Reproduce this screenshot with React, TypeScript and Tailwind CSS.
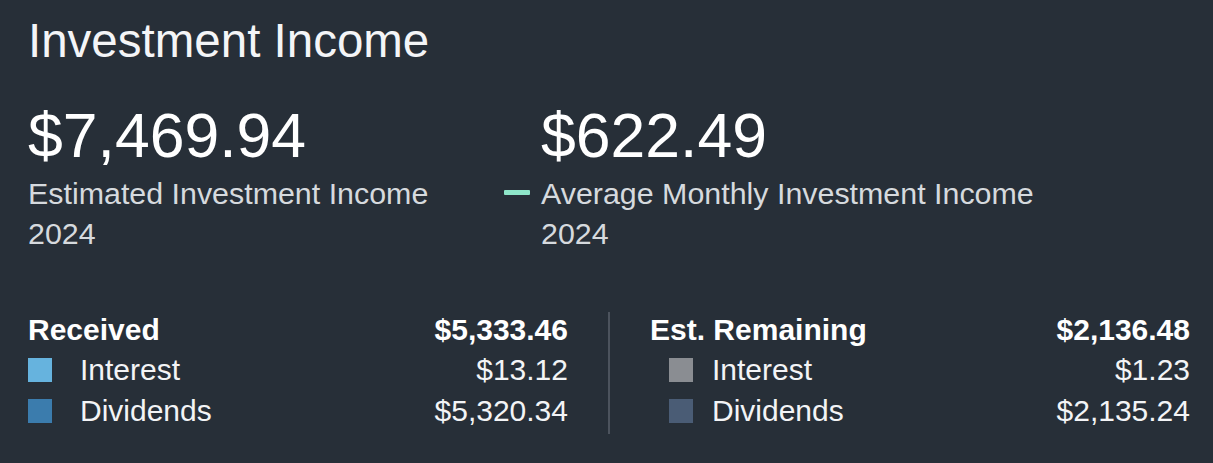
const received = {
  label: "Received",
  total: "$5,333.46",
  rows: [
    { name: "Interest", amount: "$13.12", color: "bg-[#66b3de]" },
    { name: "Dividends", amount: "$5,320.34", color: "bg-[#3b7cad]" },
  ],
};

const remaining = {
  label: "Est. Remaining",
  total: "$2,136.48",
  rows: [
    { name: "Interest", amount: "$1.23", color: "bg-[#8a8d92]" },
    { name: "Dividends", amount: "$2,135.24", color: "bg-[#4a5c75]" },
  ],
};

type Breakdown = typeof received;

function BreakdownList({
  data,
  indent,
}: {
  data: Breakdown;
  indent: boolean;
}) {
  return (
    <div className="flex-1">
      <div className="flex items-center justify-between text-[30px] font-bold leading-[40px] text-white">
        <span>{data.label}</span>
        <span>{data.total}</span>
      </div>
      {data.rows.map((row) => (
        <div
          key={row.name}
          className="flex items-center justify-between text-[30px] leading-[40.5px] text-[#f3f4f6]"
        >
          <div className={`flex items-center ${indent ? "pl-[19px]" : ""}`}>
            <span className={`h-6 w-6 ${row.color}`} />
            <span className={indent ? "ml-[19px]" : "ml-[28px]"}>
              {row.name}
            </span>
          </div>
          <span>{row.amount}</span>
        </div>
      ))}
    </div>
  );
}

export default function App() {
  return (
    <div
      className="h-[463px] w-[1213px] overflow-hidden bg-[#272f38] pl-[28px] pr-[23px] pt-[13px]"
      style={{ fontFamily: '"Liberation Sans", Arial, sans-serif' }}
    >
      <h1 className="text-[47.5px] font-light leading-[56px] text-[#f4f5f7]">
        Investment Income
      </h1>

      <div className="mt-[31px] flex">
        <div className="w-[513px]">
          <div className="text-[62.5px] font-light leading-[70px] text-white">
            $7,469.94
          </div>
          <div className="mt-[3px] text-[30.4px] leading-[40px] text-[#d6dade]">
            <div>Estimated Investment Income</div>
            <div>2024</div>
          </div>
        </div>
        <div className="relative">
          <div className="text-[62.5px] font-light leading-[70px] text-white">
            $622.49
          </div>
          <div className="relative mt-[3px] text-[30.4px] leading-[40px] text-[#d6dade]">
            <span className="absolute left-[-37px] top-[17px] h-[5px] w-[26px] rounded-[1px] bg-[#8ee6c9]" />
            <div>Average Monthly Investment Income</div>
            <div>2024</div>
          </div>
        </div>
      </div>

      <div className="mt-[57px] flex items-start">
        <BreakdownList data={received} indent={false} />
        <div className="mx-[40px] mt-[2px] h-[122px] w-[2px] self-start bg-[#4c535d]" />
        <BreakdownList data={remaining} indent />
      </div>
    </div>
  );
}
